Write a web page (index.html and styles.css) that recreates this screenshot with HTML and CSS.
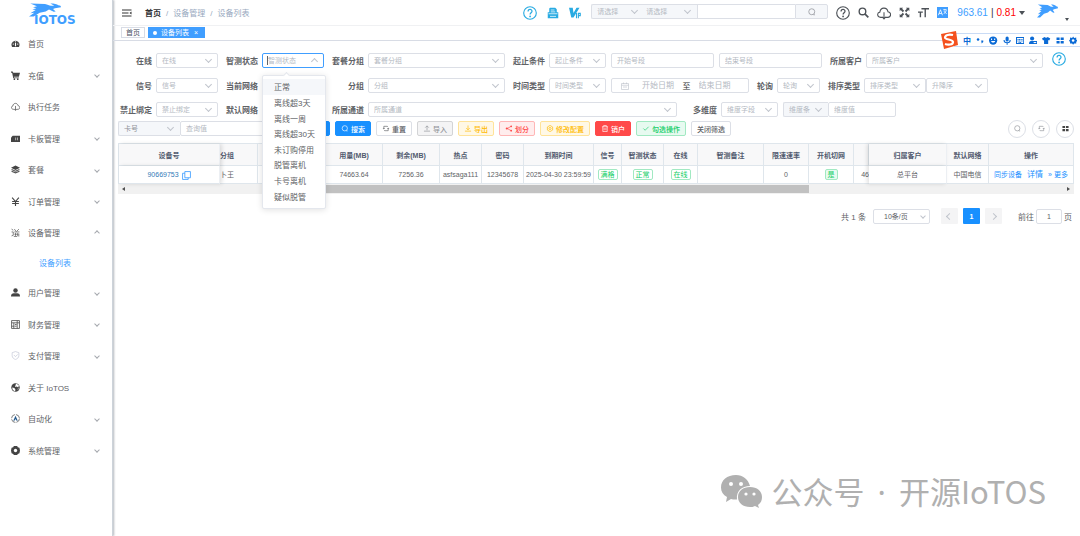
FILE: index.html
```
<!DOCTYPE html>
<html lang="zh-CN">
<head>
<meta charset="UTF-8">
<meta name="viewport" content="width=device-width, initial-scale=1.0">
<title>设备列表</title>
<link rel="stylesheet" href="styles.css">
</head>
<body>
<svg class="sprite" aria-hidden="true">
    <symbol id="i-hare" viewBox="0 0 48 30" preserveAspectRatio="none"><path d="M2 1l22 1c4 1 6 3 9 4h5l-6-5c6 0 10 1 12 4 3 0 4 2 4 4l-9 2-3 2 4 5-3 1-7-5-5 4-9 3-9 8H0l8-8-6 1 8-7-5-1 6-3-5-2 6-2z" fill="currentColor"/></symbol>
    <symbol id="i-help" viewBox="0 0 16 16"><circle cx="8" cy="8" r="7.2" fill="none" stroke="currentColor" stroke-width="1.3"/><path d="M5.8 6.2c0-3 4.5-3 4.5-.2 0 1.7-2.2 1.8-2.2 3.7" fill="none" stroke="currentColor" stroke-width="1.4"/><circle cx="8.1" cy="11.9" r="1" fill="currentColor"/></symbol>
    <symbol id="i-search" viewBox="0 0 16 16"><circle cx="7.5" cy="7.5" r="6" fill="none" stroke="currentColor" stroke-width="1.5"/><path d="M11 13.5h3" stroke="currentColor" stroke-width="1.5"/></symbol>
    <symbol id="i-refresh" viewBox="0 0 16 16"><path d="M3 9V3h8l2 2M13 7v6H5l-2-2M1 7l2 2 2-2M11 9l2-2 2 2" fill="none" stroke="currentColor" stroke-width="1.5"/></symbol>
    <symbol id="i-cloud" viewBox="0 0 16 16"><path d="M6 13H4.2C-.3 12.500-.2 7.500 3.300 7 4 1 11.500 1 12.500 6.500c4 .5 4 6 .2 6.500H10M8 7v8M6 12.500l2 2.300 2-2.300" fill="none" stroke="currentColor" stroke-width="1.2"/></symbol>
    <symbol id="i-grid" viewBox="0 0 16 16"><path d="M1 2h6v5H1zM9 2h6v5H9zM1 9h6v5H1zM9 9h6v5H9z" fill="currentColor"/></symbol>
</svg>

<div class="app">
    <aside class="sidebar">
        <div class="logo">
            <svg width="54" height="25" viewBox="0 0 54 25"><use href="#i-hare" x="0" y="1" width="32" height="14"/><text x="5" y="22" class="logo-text" fill="#409eff">IOTOS</text></svg>
        </div>
        <ul class="menu">
            <li><a href="#"><svg viewBox="0 0 16 16"><path d="M2 14a7 7 0 1 1 12 0z"/><g fill="#fff"><circle cx="4" cy="9" r="1.200"/><circle cx="8" cy="5" r="1.200"/><circle cx="12" cy="9" r="1.200"/><path d="M7 7h2v6H7z"/></g></svg>首页</a></li>
            <li><a href="#" class="more"><svg viewBox="0 0 16 16"><path d="M0 1h3l1 2h12l-2 7H5l.5 1.500H14V13H4L2 3H0z"/><circle cx="6" cy="14.500" r="1.500"/><circle cx="12" cy="14.500" r="1.500"/></svg>充值</a></li>
            <li><a href="#"><svg><use href="#i-cloud"/></svg>执行任务</a></li>
            <li><a href="#" class="more"><svg viewBox="0 0 16 16"><path d="M3 3h13v11H0V6z"/><path d="M8 6h1v5H8zM11 6h1v5h-1z" fill="#fff"/></svg>卡板管理</a></li>
            <li><a href="#" class="more"><svg viewBox="0 0 16 16"><path d="M8 1l8 4-8 4-8-4z"/><path d="M1 8l7 3 7-3M1 11l7 3 7-3" fill="none" stroke="#555" stroke-width="2"/></svg>套餐</a></li>
            <li><a href="#" class="more"><svg viewBox="0 0 16 16"><path d="M2 1l6 7 6-7M8 8v8M2 8h12M2 11.500h12" fill="none" stroke="#444" stroke-width="2"/></svg>订单管理</a></li>
            <li><a href="#" class="more open"><svg viewBox="0 0 16 16"><path d="M1 2l3 2M1 7h3v6l-3 1M6 2l3 4M14 2l-4 4M6 7h9M8 9v5M12 9v5h3M6 11h9M5 15h6" fill="none" stroke="#555" stroke-width="1.300"/></svg>设备管理</a></li>
            <li class="sub"><a href="#">设备列表</a></li>
            <li><a href="#" class="more"><svg viewBox="0 0 16 16"><circle cx="8" cy="4.500" r="4"/><path d="M0 15c0-4 2-5 5-5.500h6c3 .5 5 1.500 5 5.500z"/></svg>用户管理</a></li>
            <li><a href="#" class="more"><svg viewBox="0 0 16 16"><path d="M1 1h14v14H1zM1 5h14M1 11h5M11 1v14M5 5v10M7 8h3M7 11h3" fill="none" stroke="#555" stroke-width="1.500"/></svg>财务管理</a></li>
            <li><a href="#" class="more"><svg viewBox="0 0 16 16"><path d="M8 1l6 2v5c0 4-3 6-6 7-3-1-6-3-6-7V3zM5 7l3 3 4-4" fill="none" stroke="#c5cad8" stroke-width="1.300"/></svg>支付管理</a></li>
            <li><a href="#"><svg viewBox="0 0 16 16"><circle cx="8" cy="8" r="7.500"/><path d="M9 1l5 3-1 4-3-2-3 1zM2 8l4 1 2 3-1 3-4-3zM12 10l2-1-2 4z" fill="#fff"/></svg>关于 IoTOS</a></li>
            <li><a href="#" class="more"><svg viewBox="0 0 16 16"><circle cx="8" cy="8" r="7" fill="none" stroke="#555" stroke-width="1.300" stroke-dasharray="9 2"/><path d="M8 3l4 9h-2L8 9l-2 3H4z" fill="#23588c"/></svg>自动化</a></li>
            <li><a href="#" class="more"><svg viewBox="0 0 16 16"><path d="M5 0h6l1 2 3 1 1 5-1 5-3 1-1 2H5l-1-2-3-1-1-5 1-5 3-1z"/><circle cx="8" cy="8" r="3" fill="#fff"/></svg>系统管理</a></li>
        </ul>
    </aside>

    <main class="main">
        <header class="navbar">
            <svg class="fold" viewBox="0 0 20 16"><path d="M0 2h19M0 8h13M0 14h19" stroke="#333" stroke-width="2"/><path d="M19 5v6l-4-3z" fill="#333"/></svg>
            <nav class="crumbs"><a href="#" class="home">首页</a><i>/</i><a href="#">设备管理</a><i>/</i><a href="#">设备列表</a></nav>
            <div class="cyan-icons">
                <svg><use href="#i-help"/></svg>
                <svg viewBox="0 0 16 16"><path d="M4 1h7l2 2v4h2v8H1V7h2V2z" fill="currentColor"/><path d="M5 4h5M5 6.500h6M2 9h12M4 12.500h8" stroke="#fff"/></svg>
                <svg viewBox="0 0 16 16"><path d="M0 1h5l1 7 4-7h4L6 14H3z" fill="currentColor"/><path d="M10 8v7M12.500 15V8.500h2.500v3h-2" fill="none" stroke="currentColor" stroke-width="1.500"/></svg>
            </div>
            <div class="group nav-search">
                <span class="select w53 gray"><select aria-label="类型"><option>请选择</option></select></span>
                <span class="select w53 gray tight"><select aria-label="条件"><option>请选择</option></select></span>
                <input type="text" class="grow" aria-label="搜索内容">
                <button class="nav-go" aria-label="搜索"><svg><use href="#i-search"/></svg></button>
            </div>
            <div class="nav-icons">
                <svg class="big"><use href="#i-help"/></svg>
                <svg viewBox="0 0 16 16"><circle cx="6.500" cy="6.500" r="4.800" fill="none" stroke="currentColor" stroke-width="2"/><path d="M10 10l5 5" stroke="currentColor" stroke-width="2.500"/></svg>
                <svg class="big"><use href="#i-cloud"/></svg>
                <svg viewBox="0 0 16 16"><path d="M1 1h5L4.500 2.500l3 3-2 2-3-3L1 6zM15 1v5l-1.500-1.500-3 3-2-2 3-3L10 1zM1 15v-5l1.500 1.500 3-3 2 2-3 3L6 15zM15 15h-5l1.500-1.500-3-3 2-2 3 3L15 10z" fill="currentColor"/></svg>
                <svg viewBox="0 0 16 16"><path d="M5 2.500h11M10.500 2v13M0 7.500h7M3.500 7v8" fill="none" stroke="currentColor" stroke-width="2"/></svg>
                <svg viewBox="0 0 16 16"><path d="M0 0h16v16H0z" fill="#409eff"/><path d="M2 12l3-8 3 8M3 9.500h4M9 4h5M11.500 3v2M10 6l4 4M14 5l-4 5" fill="none" stroke="#fff" stroke-width="1.200"/></svg>
            </div>
            <div class="balance"><b>963.61</b><span>|</span><em>0.81</em><i class="caret"></i></div>
            <svg class="avatar"><use href="#i-hare"/></svg>
            <i class="caret small"></i>
        </header>

        <div class="tags">
            <a href="#">首页</a>
            <a href="#" class="active"><i></i>设备列表<span>×</span></a>
        </div>

        <section class="content">
            <form class="filters">
                <div class="row">
                    <label class="first" for="online">在线</label>
                    <span class="select w62"><select id="online"><option>在线</option></select></span>
                    <label for="state">智测状态</label>
                    <span class="select w62 active"><input type="text" id="state" placeholder="智测状态" autocomplete="off">
                        <ul class="dropdown">
                            <li class="hover">正常</li>
                            <li>离线超3天</li>
                            <li>离线一周</li>
                            <li>离线超30天</li>
                            <li>未订购停用</li>
                            <li>脱管离机</li>
                            <li>卡号离机</li>
                            <li>疑似脱管</li>
                        </ul>
                    </span>
                    <label for="pkg">套餐分组</label>
                    <span class="select w137"><select id="pkg"><option>套餐分组</option></select></span>
                    <label for="range">起止条件</label>
                    <span class="select w57"><select id="range"><option>起止条件</option></select></span>
                    <input type="text" class="w103 near" placeholder="开始号段" aria-label="开始号段">
                    <input type="text" class="w103 near" placeholder="结束号段" aria-label="结束号段">
                    <label for="customer">所属客户</label>
                    <span class="select grow"><select id="customer"><option>所属客户</option></select></span>
                    <svg class="tip"><use href="#i-help"/></svg>
                </div>
                <div class="row">
                    <label class="first" for="signal">信号</label>
                    <span class="select w62"><select id="signal"><option>信号</option></select></span>
                    <label for="net">当前网络</label>
                    <span class="select w62"><select id="net"><option>当前网络</option></select></span>
                    <label for="grp">分组</label>
                    <span class="select w137"><select id="grp"><option>分组</option></select></span>
                    <label for="timetype">时间类型</label>
                    <span class="select w57"><select id="timetype"><option>时间类型</option></select></span>
                    <span class="dates near">
                        <svg viewBox="0 0 16 16"><path d="M1 3h14v12H1zM1 6.500h14M5 1v3M11 1v3M4 10h8" fill="none" stroke="currentColor" stroke-width="1.300"/></svg>
                        <input type="text" placeholder="开始日期" aria-label="开始日期">
                        <span>至</span>
                        <input type="text" placeholder="结束日期" aria-label="结束日期">
                    </span>
                    <label class="auto" for="poll">轮询</label>
                    <span class="select w43"><select id="poll"><option>轮询</option></select></span>
                    <label for="sort">排序类型</label>
                    <span class="select w62"><select id="sort"><option>排序类型</option></select></span>
                    <span class="select w62"><select aria-label="升降序"><option>升降序</option></select></span>
                </div>
                <div class="row">
                    <label class="first" for="bind">禁止绑定</label>
                    <span class="select w62"><select id="bind"><option>禁止绑定</option></select></span>
                    <label for="defnet">默认网络</label>
                    <span class="select w62"><select id="defnet"><option>默认网络</option></select></span>
                    <label for="channel">所属通道</label>
                    <span class="select w309"><select id="channel"><option>所属通道</option></select></span>
                    <label class="auto far" for="dim">多维度</label>
                    <span class="select w57"><select id="dim"><option>维度字段</option></select></span>
                    <span class="group near">
                        <span class="select w45 gray"><select aria-label="维度条件"><option>维度条</option></select></span>
                        <input type="text" class="w68" placeholder="维度值" aria-label="维度值">
                    </span>
                </div>
                <div class="row tools">
                    <span class="group query">
                        <span class="select w62 gray"><select aria-label="查询类型"><option>卡号</option></select></span>
                        <input type="text" class="grow" placeholder="查询值" aria-label="查询值">
                        <button type="button" class="btn primary add" aria-label="批量查询">+</button>
                    </span>
                    <button type="button" class="btn primary"><svg><use href="#i-search"/></svg>搜索</button>
                    <button type="button" class="btn"><svg><use href="#i-refresh"/></svg>重置</button>
                    <button type="button" class="btn info"><svg viewBox="0 0 16 16"><path d="M1 14h14M8 12V2M4 6l4-4 4 4" fill="none" stroke="currentColor" stroke-width="1.500"/></svg>导入</button>
                    <button type="button" class="btn warning"><svg viewBox="0 0 16 16"><path d="M1 14h14M8 1v10M4 7l4 4 4-4" fill="none" stroke="currentColor" stroke-width="1.500"/></svg>导出</button>
                    <button type="button" class="btn danger"><svg viewBox="0 0 16 16"><path d="M13 3L4 8l9 5" fill="none" stroke="currentColor" stroke-width="1.500"/><circle cx="3" cy="8" r="2.500"/><circle cx="13" cy="3" r="2"/><circle cx="13" cy="13" r="2"/></svg>划分</button>
                    <button type="button" class="btn warning"><svg viewBox="0 0 16 16"><path d="M8 1l6 3.500v7L8 15l-6-3.500v-7z" fill="none" stroke="currentColor" stroke-width="1.500"/><circle cx="8" cy="8" r="2.500" fill="none" stroke="currentColor" stroke-width="1.500"/></svg>修改配置</button>
                    <button type="button" class="btn danger-solid"><svg viewBox="0 0 16 16"><path d="M1 4h14M5 4V1h6v3M3 4v11h10V4M6 7v5M10 7v5" fill="none" stroke="currentColor" stroke-width="1.500"/></svg>销户</button>
                    <button type="button" class="btn success"><svg viewBox="0 0 16 16"><path d="M2 8l4 4 8-8" fill="none" stroke="currentColor" stroke-width="1.500"/></svg>勾选操作</button>
                    <button type="button" class="btn">关闭筛选</button>
                    <span class="rounds">
                        <button type="button" aria-label="显示搜索"><svg><use href="#i-search"/></svg></button>
                        <button type="button" aria-label="刷新"><svg><use href="#i-refresh"/></svg></button>
                        <button type="button" aria-label="列设置" class="dark"><svg><use href="#i-grid"/></svg></button>
                    </span>
                </div>
            </form>

            <table class="grid">
                <colgroup>
                    <col class="c101"><col class="c38"><col class="c68"><col class="c57"><col class="c57"><col class="c42"><col class="c42"><col class="c70"><col class="c28"><col class="c42"><col class="c34"><col><col class="c45"><col class="c45"><col class="c15"><col class="c78"><col class="c42"><col class="c85">
                </colgroup>
                <thead>
                    <tr><th class="fix-left">设备号</th><th class="cut">分组</th><th></th><th>用量(MB)</th><th>剩余(MB)</th><th>热点</th><th>密码</th><th>到期时间</th><th>信号</th><th>智测状态</th><th>在线</th><th>智测备注</th><th>限速速率</th><th>开机切网</th><th></th><th class="fix-right">归属客户</th><th>默认网络</th><th>操作</th></tr>
                </thead>
                <tbody>
                    <tr>
                        <td class="fix-left"><a href="#">90669753 <svg viewBox="0 0 16 16"><path d="M5 1h10v11H5zM5 4H1v11h10v-3" fill="none" stroke="#409eff" stroke-width="1.500"/></svg></a></td>
                        <td class="cut">卜王</td>
                        <td></td>
                        <td>74663.64</td><td>7256.36</td><td>asfsaga111</td><td>12345678</td><td>2025-04-30 23:59:59</td>
                        <td><span class="tag">满格</span></td><td><span class="tag">正常</span></td><td><span class="tag">在线</span></td>
                        <td></td><td>0</td><td><span class="tag solid">是</span></td><td class="tail">46</td>
                        <td class="fix-right">总平台</td><td>中国电信</td>
                        <td class="ops"><a href="#">同步设备</a><a href="#" class="wide">详情</a><a href="#">» 更多</a></td>
                    </tr>
                </tbody>
            </table>
            <div class="hscroll"><i class="left"></i><div class="thumb"></div><i class="right"></i></div>

            <div class="pager">
                <span>共 1 条</span>
                <span class="select w57 size"><select aria-label="每页条数"><option>10条/页</option></select></span>
                <button class="prev" aria-label="上一页"></button>
                <button class="current">1</button>
                <button class="next" aria-label="下一页"></button>
                <label for="page">前往</label>
                <input type="text" id="page" value="1">
                <span class="unit">页</span>
            </div>
        </section>
    </main>
</div>

<div class="ime">
    <svg class="s" viewBox="0 0 18 18"><path d="M1 3l15-3 2 14-14 4z" fill="#f4511e"/><path d="M13 4c-4-1-8 0-8 2.500S13 8 13 11s-5 3-8 2" fill="none" stroke="#fff" stroke-width="2.200"/></svg>
    <span>中</span>
    <svg viewBox="0 0 16 16"><circle cx="4" cy="6" r="2.500"/><path d="M10 8h4v3l-3 3z"/></svg>
    <svg viewBox="0 0 16 16"><circle cx="8" cy="8" r="8"/><path d="M4 9c1 4 7 4 8 0zM4 4h2v3H4zM10 4h2v3h-2z" fill="#fff"/></svg>
    <svg viewBox="0 0 16 16"><rect x="5" y="0" width="6" height="10" rx="3"/><path d="M2 7c0 7 12 7 12 0M8 12v4" fill="none" stroke="#0a6ad6" stroke-width="2"/></svg>
    <svg viewBox="0 0 16 16"><path d="M1 2h14v12H1z" fill="none" stroke="#0a6ad6" stroke-width="2"/><path d="M3 6h10M3 9h10M5 12h6" stroke="#0a6ad6" stroke-width="2" stroke-dasharray="2 1"/></svg>
    <svg viewBox="0 0 16 16"><circle cx="6" cy="4" r="4"/><path d="M0 15c0-5 2-6 6-6h10v6z"/><path d="M9 11h5v2H9z" fill="#fff"/></svg>
    <svg viewBox="0 0 16 16"><path d="M5 1c1 2 5 2 6 0l5 3-2 4-2-1v8H4V7L2 8 0 4z"/></svg>
    <svg viewBox="0 0 16 16"><use href="#i-grid"/></svg>
    <svg viewBox="0 0 16 16"><path d="M8 0l2 3 4-1v4l2 2-2 3v3h-4l-2 2-2-2H2v-3L0 8l2-2V2l4 1z"/><circle cx="8" cy="8" r="2.500" fill="#fff"/></svg>
</div>

<div class="watermark">
    <svg viewBox="0 0 42 34"><path d="M15 0C6 0 0 5 0 12.500c0 4 2 7.500 6 9.500l-1 5 5-3c2 .6 4 .7 6 .5C15 16 21 11 29 11 27 4 22 0 15 0z"/><path d="M29 12c-7 0-12 4-12 10s5 10 12 10c2 0 3 0 5-1l4 2-1-3c3-2 4-5 4-8 0-6-5-10-12-10z"/><g fill="#fff"><circle cx="10" cy="9" r="2"/><circle cx="20" cy="9" r="2"/><circle cx="25" cy="19" r="1.600"/><circle cx="33" cy="19" r="1.600"/></g></svg>
    <p>公众号<span> · </span>开源IoTOS</p>
</div>
</body>
</html>
```
FILE: styles.css
```
*, *::before, *::after {
    box-sizing: border-box;
}
body {
    margin: 0;
    font-family: "Liberation Sans", "Noto Sans CJK SC", sans-serif;
    font-size: 8px;
    color: #606266;
    background: #fff;
    overflow: hidden;
}
a {
    color: inherit;
    text-decoration: none;
}
i, em {
    font-style: normal;
}
ul {
    list-style: none;
    margin: 0;
    padding: 0;
}
input, select, button {
    font-family: inherit;
    font-size: 7px;
    margin: 0;
    outline: none;
}
svg {
    fill: currentColor;
    flex: none;
}
.sprite {
    position: absolute;
    width: 0;
    height: 0;
}
.app {
    display: flex;
    min-height: 100vh;
}

/* sidebar */
.sidebar {
    width: 113px;
    flex: none;
    border-right: 1px solid #cdd3da;
    box-shadow: 1px 0 2px rgba(0, 21, 41, 0.3);
}
.logo {
    height: 28px;
    padding: 2px 0 0 29px;
    color: #409eff;
}
.logo svg {
    display: block;
    overflow: visible;
}
.logo-text {
    font: bold 12px "DejaVu Sans", sans-serif;
}
.menu {
    display: flex;
    flex-direction: column;
    height: 438px;
}
.menu li {
    flex: 9;
    display: flex;
    align-items: center;
}
.menu a {
    flex: 1;
    display: flex;
    align-items: center;
    padding: 0 13px 0 11px;
}
.menu svg {
    width: 9px;
    height: 9px;
    margin-right: 8px;
    color: #444;
}
.menu .more::after {
    content: "";
    margin-left: auto;
    width: 4px;
    height: 4px;
    border: solid #a5a8ae;
    border-width: 0 1px 1px 0;
    transform: rotate(45deg);
}
.menu .open::after {
    transform: rotate(225deg);
}
.menu .sub {
    flex: 8;
    color: #409eff;
}
.menu .sub a {
    padding-left: 39px;
}

/* top bar */
.main {
    flex: 1;
    min-width: 0;
}
.navbar {
    display: flex;
    align-items: center;
    height: 26px;
    padding: 0 11px 0 9px;
    border-bottom: 1px solid #f0f1f3;
}
.fold {
    width: 10px;
    height: 8px;
}
.crumbs {
    margin-left: 13px;
    color: #97a8be;
    flex: 1;
}
.crumbs .home {
    color: #303133;
    font-weight: bold;
}
.crumbs i {
    margin: 0 5px;
}
.cyan-icons {
    display: flex;
    align-items: center;
    gap: 10px;
    margin-right: 10px;
    color: #29abe2;
}
.cyan-icons svg {
    width: 12px;
    height: 12px;
}
.cyan-icons svg:first-child {
    width: 14px;
    height: 14px;
}
.nav-search {
    width: 237px;
    margin-bottom: 2px;
}
.nav-go {
    width: 33px;
    height: 15px;
    padding: 0;
    border: 1px solid #dcdfe6;
    border-radius: 0 2px 2px 0;
    background: #f5f7fa;
    color: #909399;
}
.nav-go svg {
    display: block;
    width: 8px;
    height: 8px;
    margin: auto;
}
.nav-icons {
    display: flex;
    align-items: center;
    gap: 8px;
    margin: 0 9px 0 8px;
    color: #4c5157;
}
.nav-icons svg {
    width: 11px;
    height: 11px;
}
.nav-icons .big {
    width: 14px;
    height: 14px;
}
.balance {
    display: flex;
    align-items: center;
    gap: 3px;
    font-size: 10px;
    color: #333;
}
.balance b {
    font-weight: normal;
    color: #409eff;
}
.balance em {
    color: #f00;
}
.caret {
    border: 3px solid transparent;
    border-top: 4px solid #4c5157;
    border-bottom: 0;
}
.caret.small {
    border-width: 3px 2px 0;
    margin: 14px 0 0 7px;
}
.avatar {
    width: 21px;
    height: 14px;
    margin: 0 0 4px 12px;
    color: #409eff;
}

/* open page tabs */
.tags {
    display: flex;
    gap: 3px;
    height: 15px;
    padding: 1px 0 0 8px;
    border-bottom: 1px solid #d8dce5;
    font-size: 7px;
}
.tags a {
    height: 11px;
    line-height: 9px;
    padding: 0 4px;
    border: 1px solid #d8dce5;
    color: #495060;
}
.tags .active {
    background: #409eff;
    border-color: #409eff;
    color: #fff;
}
.tags i {
    display: inline-block;
    width: 4px;
    height: 4px;
    margin-right: 4px;
    border-radius: 50%;
    background: #fff;
}
.tags span {
    margin: 0 2px 0 5px;
}

/* filters */
.content {
    padding: 12px 6px 0 5px;
}
.row {
    display: flex;
    align-items: center;
    height: 15px;
    margin-bottom: 9px;
}
.row:first-child {
    margin-bottom: 10px;
}
.row:nth-child(3) {
    margin-bottom: 4px;
}
.row label {
    flex: none;
    width: 32px;
    margin: 0 4px 0 8px;
    text-align: right;
    font-weight: bold;
    white-space: nowrap;
}
.row label.first {
    width: 34px;
    margin-left: 0;
}
.row label.auto {
    width: auto;
}
.row label.far {
    margin-left: 16px;
}
.near {
    margin-left: 5px;
}
.w43 { width: 43px; }
.w45 { width: 45px; }
.w53 { width: 53px; }
.w57 { width: 57px; }
.w62 { width: 62px; }
.w68 { width: 68px; }
.w103 { width: 103px; }
.w137 { width: 137px; }
.w309 { width: 309px; }
.grow {
    flex: 1;
    min-width: 0;
}
input[type="text"], .select select {
    height: 15px;
    padding: 0 5px;
    border: 1px solid #dcdfe6;
    border-radius: 2px;
    background: #fff;
    color: #606266;
}
input::placeholder {
    color: #b4b9c2;
}
.select {
    position: relative;
    display: flex;
}
.select select, .select input {
    appearance: none;
    width: 100%;
    color: #b4b9c2;
}
.select::after {
    content: "";
    position: absolute;
    right: 7px;
    top: 4px;
    width: 5px;
    height: 5px;
    border: solid #c0c4cc;
    border-width: 0 1px 1px 0;
    transform: rotate(45deg);
    pointer-events: none;
}
.select.active input[type="text"] {
    border-color: #409eff;
}
.select.active::after {
    top: 6px;
    transform: rotate(225deg);
}
.select.active::before {
    content: "";
    position: absolute;
    left: 5px;
    top: 3px;
    width: 1px;
    height: 9px;
    background: #606266;
}
.group {
    display: flex;
}
.group .gray select {
    background: #f5f7fa;
    color: #909399;
    border-right: 0;
    border-radius: 2px 0 0 2px;
}
.group .gray.tight select {
    border-left: 0;
    border-radius: 0;
    padding-left: 2px;
}
.nav-search .gray select, .near .gray select {
    color: #b4b9c2;
}
.nav-search input[type="text"] {
    border-right: 0;
    border-radius: 0;
}
.dates {
    display: flex;
    align-items: center;
    width: 138px;
    height: 15px;
    padding: 0 9px;
    border: 1px solid #dcdfe6;
    border-radius: 2px;
    color: #303133;
}
.dates svg {
    width: 8px;
    height: 8px;
    color: #c0c4cc;
}
.dates input[type="text"] {
    flex: 1;
    min-width: 0;
    height: 13px;
    padding: 0 0 0 13px;
    border: 0;
    font-size: 8px;
}
.dates input[type="text"]:last-child {
    padding-left: 8px;
}
.tip {
    width: 14px;
    height: 14px;
    margin: 0 8px 3px 9px;
    color: #29abe2;
}
.dropdown {
    position: absolute;
    z-index: 5;
    left: 0;
    top: 22px;
    width: 64px;
    height: 134px;
    padding: 3px 0 4px;
    display: flex;
    flex-direction: column;
    background: #fff;
    border: 1px solid #e4e7ed;
    border-radius: 2px;
    box-shadow: 0 1px 6px rgba(0, 0, 0, 0.12);
}
.dropdown::before {
    content: "";
    position: absolute;
    left: 21px;
    top: -3px;
    width: 5px;
    height: 5px;
    background: #fff;
    border: solid #e4e7ed;
    border-width: 1px 0 0 1px;
    transform: rotate(45deg);
}
.dropdown li {
    flex: 1;
    display: flex;
    align-items: center;
    padding-left: 11px;
}
.dropdown .hover {
    background: #f5f7fa;
}

/* buttons */
.tools {
    gap: 5px;
    margin-bottom: 7px;
}
.query {
    width: 212px;
}
.btn {
    display: flex;
    align-items: center;
    justify-content: center;
    gap: 2px;
    height: 15px;
    padding: 0 5px;
    border: 1px solid #dcdfe6;
    border-radius: 2px;
    background: #fff;
    color: #606266;
    font-weight: 500;
    white-space: nowrap;
    cursor: pointer;
}
.btn svg {
    width: 8px;
    height: 7px;
}
.btn.add {
    width: 14px;
    border-radius: 0 2px 2px 0;
}
.btn.primary {
    background: #1890ff;
    border-color: #1890ff;
    color: #fff;
}
.btn.info {
    background: #f4f4f5;
    border-color: #d3d4d6;
    color: #909399;
}
.btn.warning {
    background: #fff8e6;
    border-color: #ffe399;
    color: #ffba00;
}
.btn.danger {
    background: #ffeded;
    border-color: #ffb6b6;
    color: #ff4949;
}
.btn.danger-solid {
    background: #ff4949;
    border-color: #ff4949;
    color: #fff;
}
.btn.success {
    background: #e7faf0;
    border-color: #a1e9c2;
    color: #13ce66;
}
.rounds {
    display: flex;
    gap: 6px;
    margin-left: auto;
}
.rounds button {
    width: 18px;
    height: 18px;
    padding: 0;
    border: 1px solid #dcdfe6;
    border-radius: 50%;
    background: #fff;
    color: #909399;
}
.rounds svg {
    display: block;
    width: 7px;
    height: 7px;
    margin: auto;
}
.rounds .dark {
    color: #444;
}

/* device table */
.grid {
    width: 100%;
    table-layout: fixed;
    border-collapse: separate;
    border-spacing: 0;
    border: 1px solid #dfe6ec;
    border-width: 1px 0 0 1px;
    font-size: 7px;
    text-align: center;
}
.c15 { width: 15px; }
.c28 { width: 28px; }
.c34 { width: 34px; }
.c38 { width: 38px; }
.c42 { width: 42px; }
.c45 { width: 45px; }
.c57 { width: 57px; }
.c68 { width: 68px; }
.c70 { width: 70px; }
.c78 { width: 78px; }
.c85 { width: 85px; }
.c101 { width: 101px; }
.grid th, .grid td {
    padding: 0;
    border: solid #dfe6ec;
    border-width: 0 1px 1px 0;
    white-space: nowrap;
}
.grid th {
    height: 22px;
    background: #f8f8f9;
    color: #515a6e;
}
.grid td {
    height: 18px;
    line-height: 11px;
    background: #fff;
}
.grid a {
    color: #1890ff;
}
.grid .fix-left a {
    color: #337ab7;
}
.grid .fix-left svg {
    width: 9px;
    height: 9px;
    margin-left: 1px;
    vertical-align: middle;
}
.grid .fix-left, .grid .fix-right {
    position: relative;
    border-right-color: #eceff3;
}
.grid .fix-left {
    box-shadow: 2px 0 4px rgba(0, 0, 0, 0.12);
}
.grid .fix-right {
    box-shadow: -2px 0 4px rgba(0, 0, 0, 0.12);
}
.grid .cut {
    text-align: left;
}
.grid .tail {
    text-align: right;
    border-right: 0;
}
.tag {
    display: inline-block;
    height: 11px;
    line-height: 9px;
    padding: 0 2px;
    border: 1px solid #a1e9c2;
    border-radius: 2px;
    color: #13ce66;
    vertical-align: middle;
}
.tag.solid {
    background: #e7faf0;
}
.ops a {
    margin: 0 2px;
}
.ops .wide {
    font-size: 8px;
    margin: 0 3px;
}
.hscroll {
    display: flex;
    align-items: center;
    justify-content: space-between;
    height: 10px;
    padding: 0 4px;
    background: #f1f1f1;
}
.hscroll .thumb {
    width: 51%;
    height: 8px;
    margin-right: 83px;
    margin-left: auto;
    background: #c1c1c1;
}
.hscroll i {
    border: 2px solid transparent;
}
.hscroll .left {
    border-left: 0;
    border-right: 3px solid #505050;
}
.hscroll .right {
    margin-left: 175px;
    border-right: 0;
    border-left: 3px solid #505050;
}

/* pagination */
.pager {
    display: flex;
    align-items: center;
    justify-content: flex-end;
    margin-top: 14px;
    padding-right: 2px;
}
.pager .size {
    margin: 0 11px 0 7px;
}
.pager .size select {
    color: #606266;
    padding-left: 10px;
}
.pager .size::after {
    right: 5px;
    top: 5px;
    width: 4px;
    height: 4px;
}
.pager button {
    width: 17px;
    height: 16px;
    margin-right: 5px;
    padding: 0;
    border: 0;
    border-radius: 1px;
    background: #f4f4f5;
    color: #606266;
    font-weight: bold;
}
.pager .current {
    background: #1890ff;
    color: #fff;
}
.prev::before, .next::before {
    content: "";
    display: inline-block;
    width: 5px;
    height: 5px;
    border: solid #c0c4cc;
    border-width: 0 1px 1px 0;
    transform: rotate(-45deg);
}
.prev::before {
    transform: rotate(135deg);
}
.pager label {
    margin: 0 2px 0 11px;
}
.pager input[type="text"] {
    width: 26px;
    text-align: center;
}
.unit {
    margin-left: 2px;
}

/* input method bar */
.ime {
    position: absolute;
    right: 0;
    top: 31px;
    z-index: 6;
    display: flex;
    align-items: center;
    gap: 5px;
    width: 140px;
    height: 18px;
    padding-right: 3px;
    color: #0a6ad6;
    font-weight: bold;
    background: linear-gradient(#c9dbf5, #c9dbf5) 14px 2px / 100% 1px no-repeat,
        linear-gradient(#c9dbf5, #c9dbf5) 14px 15px / 100% 1px no-repeat,
        linear-gradient(#fff, #fff) 14px 2px / 100% 13px no-repeat;
}
.ime svg {
    width: 8px;
    height: 9px;
    flex: 1;
}
.ime .s {
    flex: none;
    width: 18px;
    height: 18px;
}

.watermark {
    position: absolute;
    right: 34px;
    bottom: 24px;
    display: flex;
    align-items: center;
    gap: 8px;
    font-family: "Noto Sans CJK SC", sans-serif;
    font-size: 31px;
    line-height: 40px;
    color: #b0b0b0;
}
.watermark p {
    margin: 0;
}
.watermark span {
    margin: 0 5px;
    font-family: "Noto Sans", sans-serif;
}
.watermark svg {
    width: 42px;
    height: 34px;
}
```
